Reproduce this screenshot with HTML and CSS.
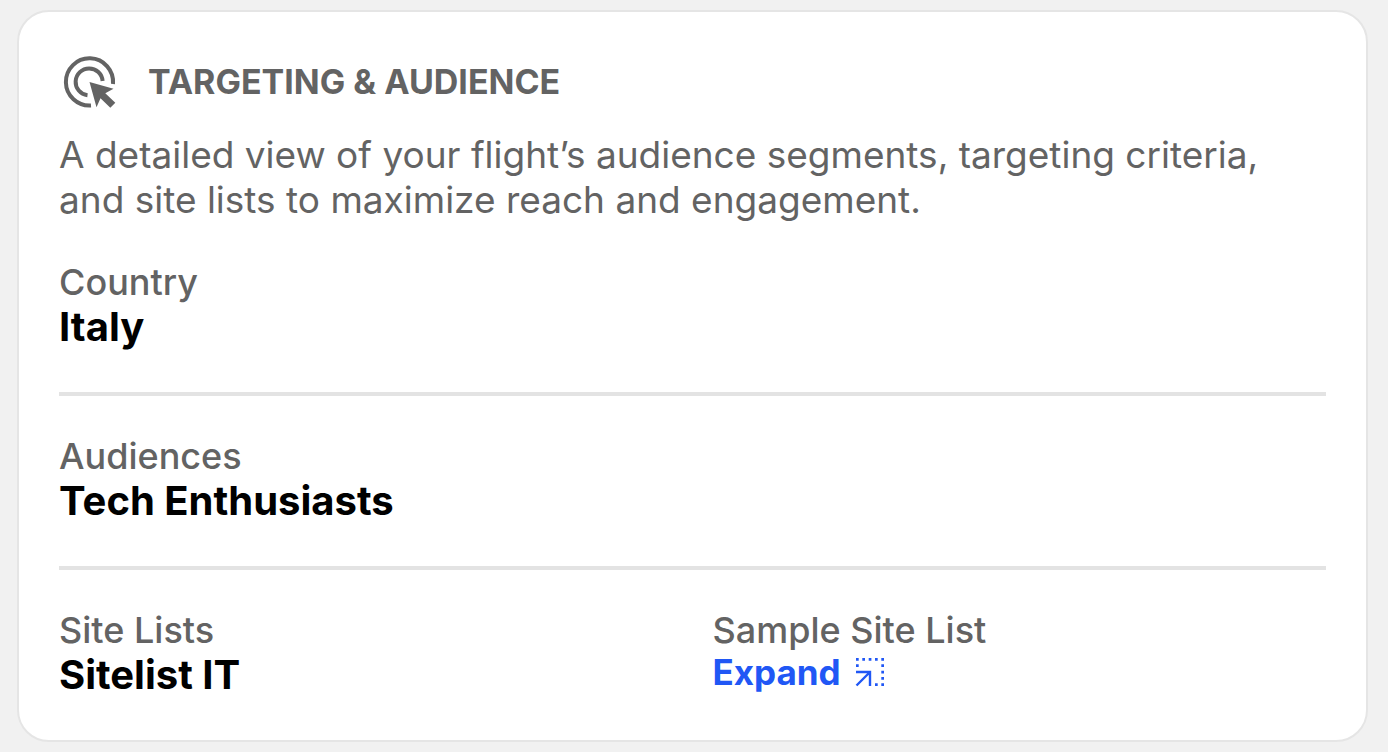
FILE: index.html
```html
<!DOCTYPE html>
<html lang="en">
<head>
<meta charset="utf-8">
<meta name="viewport" content="width=device-width, initial-scale=1">
<title>Targeting &amp; Audience</title>
<link rel="stylesheet" href="styles.css">
</head>
<body>
<main class="card">
  <header class="card-header">
    <svg class="target-icon" viewBox="0 0 56 56" aria-hidden="true">
      <path d="M29 51.500A23.600 23.600 0 1 1 51 30M25.500 41.300A13.500 13.500 0 1 1 40.600 27" fill="none" stroke="currentColor" stroke-width="4"/>
      <path d="M27.500 28L51.500 34.700L43.300 39.300L53.300 48.700L48.300 53.700L38.500 44.300L34.500 53.300Z" fill="currentColor"/>
    </svg>
    <h1 class="card-title">TARGETING &amp; AUDIENCE</h1>
  </header>
  <p class="description">A detailed view of your flight’s audience segments, targeting criteria, and site lists to maximize reach and engagement.</p>
  <dl class="details">
    <div class="row">
      <div class="field"><dt class="label">Country</dt><dd class="value">Italy</dd></div>
    </div>
    <div class="row">
      <div class="field"><dt class="label">Audiences</dt><dd class="value">Tech Enthusiasts</dd></div>
    </div>
    <div class="row">
      <div class="field"><dt class="label">Site Lists</dt><dd class="value">Sitelist IT</dd></div>
      <div class="field"><dt class="label">Sample Site List</dt><dd class="action">
        <button class="expand" type="button">Expand
          <svg class="expand-icon" viewBox="0 0 32 32" aria-hidden="true">
            <path d="M2.500 29.500L16 16M2 16H16V30" fill="none" stroke="currentColor" stroke-width="2.400"/>
            <path d="M2 2h2.700v2.700H2zM8.300 2h2.700v2.700H8.300zM14.700 2h2.700v2.700h-2.700zM21 2h2.700v2.700H21zM27.300 2H30v2.700h-2.700zM2 8.300h2.700V11H2zM27.300 8.300H30V11h-2.700zM27.300 14.700H30v2.700h-2.700zM27.300 21H30v2.700h-2.700zM27.300 27.300H30V30h-2.700zM21 27.300h2.700V30H21z" fill="currentColor"/>
          </svg>
        </button></dd></div>
    </div>
  </dl>
</main>
</body>
</html>
```
FILE: styles.css
```css
* { box-sizing: border-box; }
body {
  margin: 0;
  padding: 10px 20px 10px 17px;
  background: #f1f1f1;
  color: #000;
  font-family: "Inter", "Open Sans", sans-serif;
}
.card {
  padding: 42px 40px 43px;
  border: 2px solid #e5e5e5;
  border-radius: 32px;
  background: #fff;
}
.card-header { display: flex; align-items: center; gap: 30px; color: #636363; }
.target-icon { width: 56px; height: 56px; margin-left: 3px; }
.card-title { margin: 0; font-size: 34px; line-height: 44px; font-weight: 700; }
.description { margin: 22px 0 0; color: #636363; font-size: 37px; line-height: 45px; }
.details { margin: 38px 0 0; }
.row { display: grid; grid-template-columns: 1fr 1fr; column-gap: 40px; }
.row + .row { margin-top: 43px; padding-top: 38px; border-top: 4px solid #e3e3e3; }
.label { color: #636363; font-size: 36px; line-height: 44px; font-weight: 500; }
.value { margin: 0; font-size: 40px; line-height: 45px; font-weight: 700; }
.action { margin: 0; }
.expand {
  display: flex;
  align-items: center;
  gap: 13px;
  padding: 0;
  border: 0;
  background: none;
  color: #2057f5;
  font: inherit;
  font-size: 35px;
  line-height: 40px;
  font-weight: 700;
}
.expand-icon { width: 32px; height: 32px; }
```
